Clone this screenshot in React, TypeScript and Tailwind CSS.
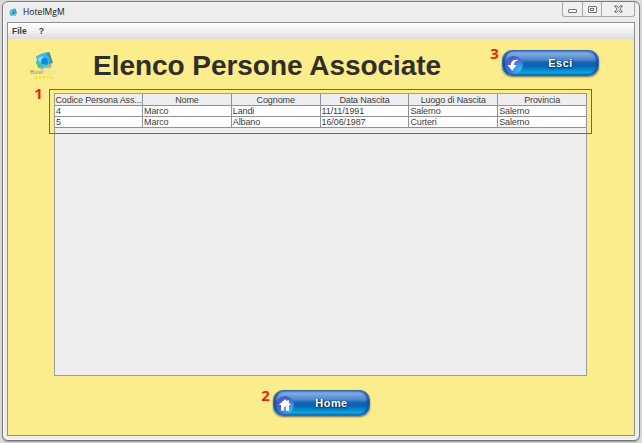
import { ReactNode } from "react";

const columns = ["Codice Persona Ass...", "Nome", "Cognome", "Data Nascita", "Luogo di Nascita", "Provincia"];
const rows = [
  ["4", "Marco", "Landi", "11/11/1991", "Salerno", "Salerno"],
  ["5", "Marco", "Albano", "16/06/1987", "Curteri", "Salerno"],
];

function Swirl({ className }: { className: string }) {
  return (
    <svg viewBox="0 0 20 20" className={className}>
      <path d="M1 5 7 2 13 0 16 2 11 6 5 8 3 12Z" fill="#4ab5e0" />
      <path d="M13 1 16 0 18 6 20 12 16 14 14 7Z" fill="#4a8e99" />
      <path d="M19 12 17 17 11 18 6 20 7 15 14 14Z" fill="#75c9b0" />
      <path d="M3 7 1 12 4 18 9 17 6 12Z" fill="#55bd91" />
      <path d="M15 14 19 15 17 18 13 18Z" fill="#e79a78" />
      <circle cx="10.5" cy="9.5" r="6" fill="#35b4f3" />
      <path d="M7 13Q7 6 11 6 15 7 14 14Z" fill="#1687df" />
      <path d="M3 8Q6 4 10 5L7 8 6 13Z" fill="#75e3f8" />
    </svg>
  );
}

function GlossyButton({ label, icon }: { label: string; icon: ReactNode }) {
  return (
    <button className="flex h-[26px] w-[97px] items-center overflow-hidden rounded-[10px] border border-[#386bab] bg-[linear-gradient(180deg,#83a7db_0%,#7ba8df_12%,#5088ce_35%,#1864b2_48%,#0862b2_60%,#0788cf_78%,#08a9e3_92%,#147fbd_100%)] shadow-[0_1px_2px_#716e5a,inset_2px_0_2px_#1451a0,inset_-2px_0_2px_#1451a0]">
      <span className="mt-[3px] ml-[2px] flex h-[18px] w-[18px] shrink-0 items-center justify-center rounded-full bg-[radial-gradient(circle_at_80%_80%,#35bdf2,#4969d9_50%,#5047b8)]">
        {icon}
      </span>
      <span className="w-[75px] text-center text-[11px] leading-[24px] font-bold tracking-[0.45px] text-white [text-shadow:0_1px_2px_#042650,1px_0_1px_#123866]">
        {label}
      </span>
    </button>
  );
}

function Marker({ n }: { n: string }) {
  return <span className="block w-[9px] text-center font-['Open_Sans',sans-serif] text-[15px] leading-[16px] font-bold text-[#f5200c]">{n}</span>;
}

export default function App() {
  return (
    <div className="h-[443px] w-[642px] overflow-hidden bg-[#dadada] pt-px pl-[2px] font-['Liberation_Sans',Arial,sans-serif]">
      <div className="flex h-[440px] w-[638px] flex-col rounded-[6px] border border-[#777b7f] bg-[#ededee] px-1 pb-[4px] shadow-[inset_0_0_0_1px_#f8f8f8,0_1px_1px_#999]">
        <header className="flex h-5 shrink-0 justify-between">
          <div className="flex items-center gap-[6px] pl-[2px]">
            <Swirl className="h-[9px] w-[8px]" />
            <span className="font-['Open_Sans',sans-serif] text-[8.5px] leading-5 tracking-[0.05px] text-[#101010]">HotelMgM</span>
          </div>
          <div className="flex h-[15px] w-[73px] rounded-b-[3px] border border-t-0 border-[#a6a8aa] bg-[#f0f0f0]">
            <div className="flex w-5 items-center justify-center border-r border-[#a6a8aa]">
              <span className="mt-1 h-[4px] w-[9px] rounded-[1px] border border-[#707477] bg-white" />
            </div>
            <div className="flex w-[19px] items-center justify-center border-r border-[#a6a8aa]">
              <span className="flex h-[7px] w-[9px] items-center justify-center rounded-[1px] border border-[#707477] bg-white">
                <span className="h-[3px] w-[4px] border border-[#707477]" />
              </span>
            </div>
            <div className="flex flex-1 items-center justify-center">
              <svg viewBox="0 0 10 8" className="h-[8px] w-[9px]">
                <path d="M.7.6H3L5 2.5 7 .6h2.3L6.5 4l2.8 3.4H7L5 5.5 3 7.4H.7L3.5 4Z" fill="white" stroke="#55595c" strokeWidth="1.1" />
              </svg>
            </div>
          </div>
        </header>

        <div className="flex min-h-0 flex-1 flex-col border border-[#8e9193]">
          <nav className="flex h-[16px] shrink-0 items-center gap-[12px] bg-[linear-gradient(180deg,#ffffff,#f3f3f3_45%,#dddddd)] pl-[4px] text-[8.5px] font-bold text-[#3d3d3d]">
            <span>File</span>
            <span>?</span>
          </nav>
          <main className="flex flex-1 flex-col bg-[#fbec8c]">
            <div className="flex h-[54px] shrink-0">
              <div className="flex w-[71px] shrink-0 flex-col items-center pt-[13px]">
                <Swirl className="h-[18px] w-[18px]" />
                <span className="font-['Liberation_Serif',serif] text-[5.5px] leading-[5px] tracking-[0.3px] text-[#578987]">
                  Hotel<span className="text-[#d9dfad]">MgM</span>
                </span>
                <span className="text-[5px] leading-[4px] text-[#f5df2c]">★★★★★</span>
              </div>
              <h1 className="w-[411px] pt-[10px] pl-[14px] text-[28px] leading-[34px] font-bold tracking-[-0.04px] whitespace-nowrap text-[#302e26]">Elenco Persone Associate</h1>
              <div className="flex gap-[3px] pt-[6px]">
                <Marker n="3" />
                <div className="pt-[5px]">
                  <GlossyButton
                    label="Esci"
                    icon={<svg viewBox="0 0 16 16" className="h-[14px] w-[14px]"><path d="M13.5 2Q4 1 4.5 8H.5L6 14.5 11 8H8Q7.5 4 13.5 2Z" fill="white" /></svg>}
                  />
                </div>
              </div>
            </div>

            <div className="flex h-[284px] shrink-0 pl-[26px]">
              <div className="-mt-[8px] w-[20px]"><Marker n="1" /></div>
              <section className="relative h-[283px] w-[533px] border border-[#9b9d98] bg-[#eeeeee]">
                <table className="w-[532px] table-fixed border-separate border-spacing-0 bg-white text-[9px] tracking-[-0.12px] text-[#3c3c3c]">
                  <colgroup>
                    <col className="w-[88px]" />
                    <col />
                    <col />
                    <col />
                    <col />
                    <col />
                  </colgroup>
                  <thead>
                    <tr className="bg-[#eeeeee]">
                      {columns.map((c) => (
                        <th key={c} className="h-[12px] overflow-hidden border-r border-b border-[#8f9397] p-0 pt-px text-center leading-[10px] font-normal whitespace-nowrap">{c}</th>
                      ))}
                    </tr>
                  </thead>
                  <tbody>
                    {rows.map((r) => (
                      <tr key={r[0]}>
                        {r.map((v, i) => (
                          <td key={i} className="h-[11px] border-r border-b border-[#8f9397] p-0 pl-px leading-[10px] whitespace-nowrap">{v}</td>
                        ))}
                      </tr>
                    ))}
                  </tbody>
                </table>
                <div className="pointer-events-none absolute -top-[5px] -left-[6px] h-[45px] w-[543px] border border-[#fb2d1a]" />
              </section>
            </div>

            <footer className="flex gap-[3px] pt-[10px] pl-[253px]">
              <Marker n="2" />
              <div className="pt-[3px]">
                <GlossyButton
                  label="Home"
                  icon={<svg viewBox="0 0 16 16" className="h-[14px] w-[14px]"><path d="M8 1.5 1 8H3.5V14.5H7V10H9V14.5H12.5V8H15L12.5 5.7V2.5H10.5V4Z" fill="white" /></svg>}
                />
              </div>
            </footer>
          </main>
        </div>
      </div>
    </div>
  );
}
